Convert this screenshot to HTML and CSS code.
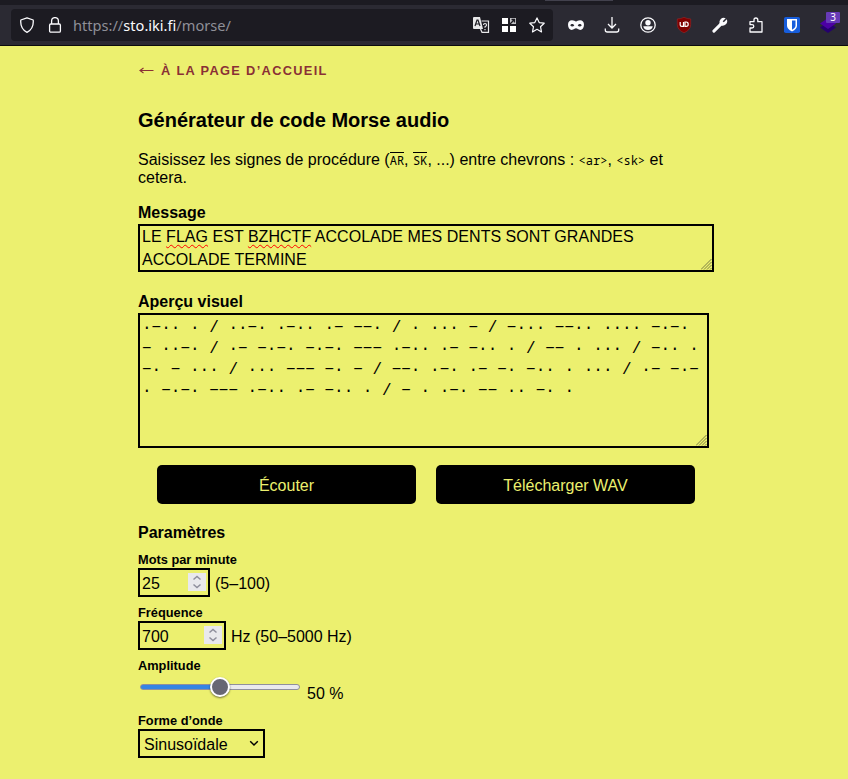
FILE: index.html
```html
<!DOCTYPE html>
<html lang="fr">
<head>
<meta charset="utf-8">
<title>Générateur de code Morse audio</title>
<link rel="stylesheet" href="styles.css">
</head>
<body>
<header class="browser">
  <div class="tabs"><span class="tab-line"></span></div>
  <div class="toolbar">
    <div class="address">
      <svg class="icon" viewBox="0 0 16 16"><path d="M8 .8 14.2 3C14.7 8.500 12.500 13 8 15.300 3.500 13 1.300 8.500 1.800 3Z" fill="none" stroke="#fbfbfe" stroke-width="1.300" stroke-linejoin="round"/></svg>
      <svg class="icon lock" viewBox="0 0 16 16"><rect x="2.600" y="7" width="10.800" height="8.200" rx="1.200" fill="none" stroke="#fbfbfe" stroke-width="1.300"/><path d="M4.600 7V4a3.400 3.400 0 0 1 6.800 0v3" fill="none" stroke="#fbfbfe" stroke-width="1.300"/></svg>
      <div class="url">https://<b>sto.iki.fi</b>/morse/</div>
      <svg class="icon translate" viewBox="0 0 17 16"><path d="M1 0h6l3 12H1Q0 12 0 11V1Q0 0 1 0Z" fill="#e8e8ea"/><path d="m2 9 2-6h1l2 6M3 7h3" fill="none" stroke="#1c1b22" stroke-width="1.200"/><path d="M8.500 4H15.500V15.300H9L7.500 12" fill="none" stroke="#e8e8ea" stroke-width="1.200"/><path d="M10.500 8q0-1.500 1.500-1.500T13.500 8q0 1-1.500 1.800v1M12 12v1.200" fill="none" stroke="#e8e8ea" stroke-width="1.200"/></svg>
      <svg class="icon grid" viewBox="0 0 16 16"><path d="M1 1h6v6H1zM1 9h6v6H1zM9 9h6v6H9z" fill="#fff"/><path d="M9 1h6v6H9z" fill="#c5c5c8"/><path d="m9 7 4-4M10.500 2.500H13.500V5.500" stroke="#1c1b22" stroke-width="1.300" fill="none"/></svg>
      <svg class="icon star" viewBox="0 0 16 16"><path d="m8 .9 2.200 4.700 5 .6-3.700 3.500 1 5.200L8 12.300l-4.500 2.600 1-5.200L.8 6.200l5-.6Z" fill="none" stroke="#fbfbfe" stroke-width="1.200" stroke-linejoin="round"/></svg>
    </div>
    <div class="actions">
      <svg class="icon" viewBox="0 0 16 16"><path fill-rule="evenodd" d="M4 3.300C6 3.300 7 4.400 8 4.400s2-1.100 4-1.100c2.500 0 4 1.600 4 4.500 0 2.900-1.600 5.100-3.700 5.100-2.100 0-3-1.600-4.300-1.600s-2.200 1.600-4.300 1.600C1.600 12.900 0 10.700 0 7.800 0 4.900 1.500 3.300 4 3.300ZM2.300 8.400C3.200 9.800 5.300 9.800 6.300 8.500 5.700 6.400 3 6.400 2.300 8.400ZM9.700 8.500C10.700 9.800 12.800 9.800 13.700 8.400 13 6.400 10.300 6.400 9.700 8.500Z" fill="#fbfbfe"/></svg>
      <svg class="icon" viewBox="0 0 16 16"><path d="M8 0v10.500M4 7l4 4 4-4M1.300 11.500V13Q1.300 15 3.300 15h9.400q2 0 2-2v-1.500" fill="none" stroke="#fbfbfe" stroke-width="1.300"/></svg>
      <svg class="icon" viewBox="0 0 16 16"><circle cx="8" cy="8" r="7.200" fill="none" stroke="#fbfbfe" stroke-width="1.300"/><circle cx="8" cy="5.700" r="2.700" fill="#fbfbfe"/><path d="M3.300 9.300h9.400Q12.300 13 8 13T3.300 9.300Z" fill="#fbfbfe"/></svg>
      <svg class="icon" viewBox="0 0 16 16"><path d="M8 .3q3 1.600 6.700 1.600v5.600Q14.700 13 8 15.800 1.300 13 1.300 7.500V1.900Q5 1.900 8 .3Z" fill="#800000" stroke="#a52a2a" stroke-width=".5"/><path d="M4.200 5v3q0 1.300 1.600 1.300H7.500V5M9 5v4.300h1.200q2 0 2-2.100T10.200 5Z" fill="none" stroke="#fff" stroke-width="1.200"/></svg>
      <svg class="icon" viewBox="0 0 16 16"><path d="m1.900 14.100 7-7" stroke="#fbfbfe" stroke-width="3" stroke-linecap="round"/><path d="M13.700 1.200 10.700 4.200l1.100 1.100 3-3q1.200 3-.9 5-2 2-4.600 1.200L7.500 6.700q-.7-2.800 1.300-4.700 2-1.900 4.900-.8Z" fill="#fbfbfe"/></svg>
      <svg class="icon" viewBox="0 0 16 16"><path d="M2 15V11h2q1.800 0 1.800-1.700T4 7.600H2V4.700H6V3q0-2 1.900-2t1.900 2v1.700H14V15Z" fill="none" stroke="#fbfbfe" stroke-width="1.300" stroke-linejoin="round"/></svg>
      <svg class="icon" viewBox="0 0 16 16"><rect width="16" height="16" rx="1.800" fill="#175ddc"/><path d="M3 2h10v6.500Q13 12 8 14.500 3 12 3 8.500Z" fill="#fff"/><path d="M8 3.500h3.500v5Q11.500 11 8 12.800Z" fill="#175ddc"/></svg>
      <span class="layers"><svg class="icon" viewBox="0 0 16 16"><path d="m8 5 8 5.500L8 16l-8-5.500Z" fill="#25006e"/><path d="m8 1 8 5.500L8 12 0 6.500Z" fill="#4c00a4"/></svg><span class="count">3</span></span>
    </div>
  </div>
</header>
<main>
  <a class="back"><svg viewBox="0 0 15 9"><path d="M14.500 4.500H1M4.500 2 1 4.500l3.500 2.500" fill="none" stroke="#8a3035" stroke-width="1.100"/></svg><span>À LA PAGE D’ACCUEIL</span></a>
  <h1>Générateur de code Morse audio</h1>
  <p class="intro">Saisissez les signes de procédure (<code class="over">AR</code>, <code class="over">SK</code>, ...) entre chevrons : <code>&lt;ar&gt;</code>, <code>&lt;sk&gt;</code> et<br>cetera.</p>
  <h2 class="h-message">Message</h2>
  <div class="area message">LE <span class="bad">FLAG</span> EST <span class="bad">BZHCTF</span> ACCOLADE MES DENTS SONT GRANDES<br>ACCOLADE TERMINE<svg class="grip" viewBox="0 0 11 11"><path d="M0 10.500 10.500 0M3 10.500 10.500 3M6 10.500 10.500 6M9 10.500 10.500 9" stroke="#6f7040" stroke-width=".9"/></svg></div>
  <h2 class="h-preview">Aperçu visuel</h2>
  <div class="area preview">·−·· · / ··−· ·−·· ·− −−· / · ··· − / −··· −−·· ···· −·−·
− ··−· / ·− −·−· −·−· −−− ·−·· ·− −·· · / −− · ··· / −·· ·
−· − ··· / ··· −−− −· − / −−· ·−· ·− −· −·· · ··· / ·− −·−
· −·−· −−− ·−·· ·− −·· · / − · ·−· −− ·· −· ·<svg class="grip" viewBox="0 0 11 11"><path d="M0 10.500 10.500 0M3 10.500 10.500 3M6 10.500 10.500 6M9 10.500 10.500 9" stroke="#6f7040" stroke-width=".9"/></svg></div>
  <div class="buttons"><button>Écouter</button><button>Télécharger WAV</button></div>
  <h2 class="h-params">Paramètres</h2>
  <h3>Mots par minute</h3>
  <div class="row"><div class="num wpm"><span>25</span><svg class="spin" viewBox="0 0 18 18"><path d="m5.500 6.500 3.500-3 3.500 3M5.500 11.500l3.500 3 3.500-3" fill="none" stroke="#8f8f9d" stroke-width="1.500"/></svg></div><span>(5–100)</span></div>
  <h3>Fréquence</h3>
  <div class="row"><div class="num freq"><span>700</span><svg class="spin" viewBox="0 0 18 18"><path d="m5.500 6.500 3.500-3 3.500 3M5.500 11.500l3.500 3 3.500-3" fill="none" stroke="#8f8f9d" stroke-width="1.500"/></svg></div><span>Hz (50–5000 Hz)</span></div>
  <h3>Amplitude</h3>
  <div class="amp"><div class="track"><span class="thumb"></span></div><span class="percent">50 %</span></div>
  <h3>Forme d’onde</h3>
  <div class="select"><span>Sinusoïdale</span><svg viewBox="0 0 10 7"><path d="m1.200 1.300 3.800 3.700 3.800-3.700" fill="none" stroke="#000" stroke-width="1.500"/></svg></div>
</main>
</body>
</html>
```
FILE: styles.css
```css
* { box-sizing: border-box; }
body { margin: 0; height: 779px; overflow: hidden; background: #ecf06f; color: #000; font: 16px/18px "Liberation Sans", Arial, sans-serif; }
.browser { height: 46px; background: #2b2a33; border-bottom: 1px solid #0c0c0d; }
.tabs { height: 5px; background: #1c1b22; padding-left: 545px; }
.tab-line { display: block; width: 68px; height: 1px; background: #42414d; }
.toolbar { height: 40px; display: flex; align-items: center; padding-left: 11px; }
.address { width: 542px; height: 32px; border-radius: 4px; background: #1c1b22; display: flex; align-items: center; padding: 0 8px; }
.icon { display: block; width: 16px; height: 16px; flex: none; }
.lock { margin-left: 12px; }
.url { margin-left: 10px; flex: 1; color: #8f8f98; font: 14.600px/22px "Noto Sans", sans-serif; white-space: nowrap; }
.url b { color: #fbfbfe; font-weight: 400; }
.translate { width: 17px; }
.grid { margin-left: 11px; }
.star { margin-left: 12px; }
.actions { display: flex; gap: 20px; margin-left: 15px; }
.layers { position: relative; }
.count { position: absolute; left: 6px; top: -5px; width: 14px; height: 11px; border-radius: 1px; background: #673ab7; color: #fff; font: 10px/11px "Noto Sans", sans-serif; text-align: center; }
main { padding: 15px 0 0 138px; width: 714px; }
.back { display: flex; align-items: center; height: 18px; color: #8a3035; font-size: 12.800px; font-weight: 700; letter-spacing: 1.330px; }
.back svg { width: 15px; height: 9px; margin: 1px 7px 0 1px; }
.back span { padding-top: 1px; }
h1 { margin: 30px 0 0; height: 23px; font-size: 20px; line-height: 23px; }
.intro { margin: 19px 0 0; white-space: nowrap; height: 36px; }
code { font: 12px/12px "Noto Sans Mono", "DejaVu Sans Mono", monospace; }
.over { display: inline-block; height: 13px; background: linear-gradient(#000, #000) 0 0 / 100% 1px no-repeat; line-height: 14px; padding-top: 2px; }
h2 { margin: 0; font-size: 16px; line-height: 18px; }
.h-message { margin-top: 17px; }
.area { position: relative; border: 2px solid #000; padding: 0 2px; }
.message { width: 576px; height: 48px; margin-top: 2px; line-height: 22.600px; white-space: nowrap; letter-spacing: .030px; }
.bad { text-decoration: underline wavy #f00 1px; text-underline-offset: 2px; text-decoration-skip-ink: none; }
.grip { position: absolute; right: 0; bottom: 0; width: 11px; height: 11px; }
.h-preview { margin-top: 21px; }
.preview { width: 571px; height: 135px; margin-top: 2px; padding-top: 3px; font: 16px/21px "Liberation Mono", monospace; white-space: pre; }
.buttons { display: flex; gap: 20px; margin: 17px 0 0 19px; }
button { width: 259px; height: 39px; border: 0; border-radius: 5px; padding: 2px 0 0; background: #000; color: #ecf06f; font: 16px/18px "Liberation Sans", Arial, sans-serif; }
.h-params { margin: 20px 0 10px; }
h3 { margin: 0; font-size: 12.800px; line-height: 15px; height: 16px; }
.row { display: flex; align-items: center; gap: 5px; height: 29px; margin-bottom: 8px; }
.row > span { padding-top: 2px; }
.num { display: flex; align-items: center; justify-content: space-between; height: 29px; border: 2px solid #000; padding: 0 2px; }
.num span, .select span { padding-top: 2px; }
.wpm { width: 72px; }
.freq { width: 88px; }
.spin { width: 18px; height: 18px; background: #e9e9ed; margin-bottom: 1px; }
.amp { display: flex; height: 39px; padding-left: 2px; }
.track { position: relative; width: 160px; height: 6px; margin-top: 10px; border: 1px solid #8f8f9d; border-radius: 3px; background: linear-gradient(90deg, #3584e4 50%, #e9e9ed 50%); }
.thumb { position: absolute; left: 69px; top: -8px; width: 20px; height: 20px; border: 2px solid #fff; border-radius: 50%; background: #676774; box-shadow: 0 1px 2px #0008; }
.percent { margin: 11px 0 0 7px; }
.select { width: 127px; height: 29px; border: 2px solid #000; display: flex; align-items: center; justify-content: space-between; padding: 0 4px; }
.select svg { width: 10px; height: 7px; }
```
